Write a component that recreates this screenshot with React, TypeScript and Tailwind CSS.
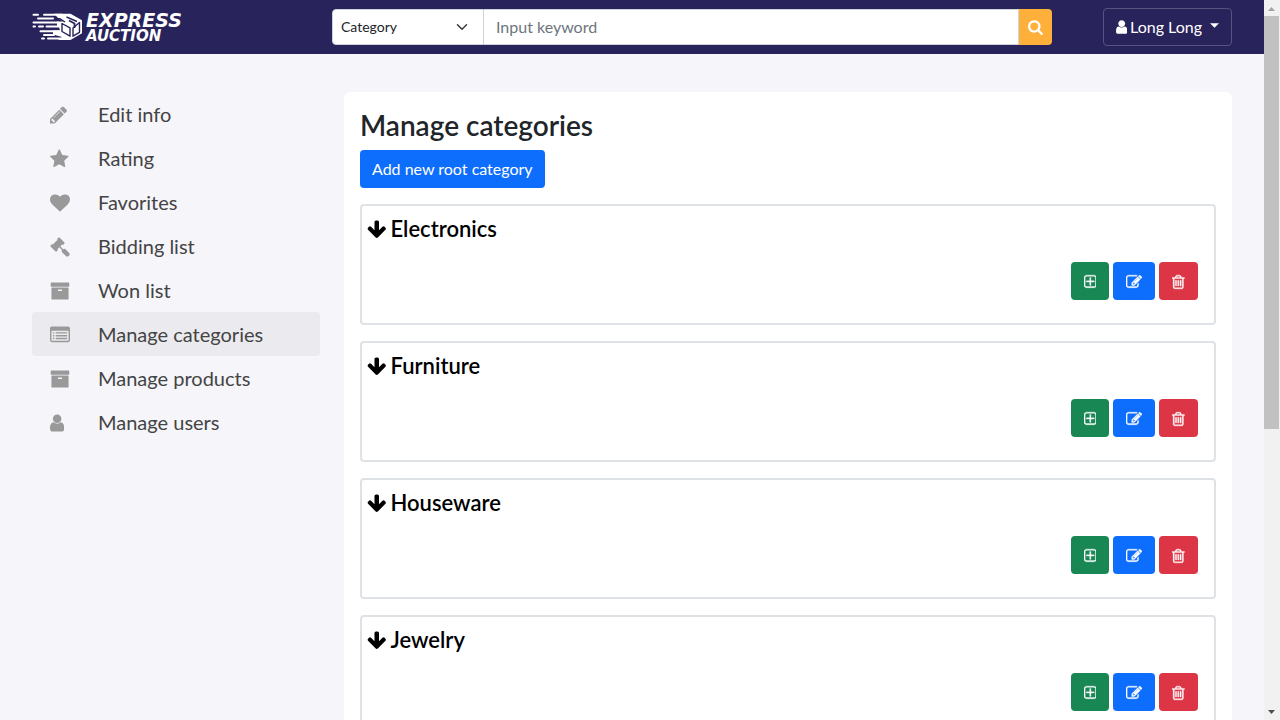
import React from "react";

type IconShape = { x: number; w: number; d: string };

const shapes = {
  pencil: {
    x: 128,
    w: 1536,
    d: "M491 1536l91-91-235-235-91 91v107h128v128h107zm523-928q0-22-22-22-10 0-17 7l-542 542q-7 7-7 17 0 22 22 22 10 0 17-7l542-542q7-7 7-17zm-54-192l416 416-832 832h-416v-416zm683 96q0 53-37 90l-166 166-416-416 166-165q36-38 90-38 53 0 91 38l235 234q37 39 37 91z",
  },
  star: {
    x: 64,
    w: 1664,
    d: "M1728 647q0 22-26 48l-363 354 86 500q1 7 1 20 0 21-10.5 35.5t-30.5 14.5q-19 0-40-12l-449-236-449 236q-22 12-40 12-21 0-31.5-14.5t-10.5-35.5q0-6 2-20l86-500-364-354q-25-27-25-48 0-37 56-46l502-73 225-455q19-41 49-41t49 41l225 455 502 73q56 9 56 46z",
  },
  heart: {
    x: 0,
    w: 1792,
    d: "M896 1664q-26 0-44-18l-624-602q-10-8-27.5-26t-55.5-65.5-68-97.5-53.5-121-23.5-138q0-220 127-344t351-124q62 0 126.5 21.5t120 58 95.5 68.5 76 68q36-36 76-68t95.5-68.5 120-58 126.5-21.5q224 0 351 124t127 344q0 221-229 450l-623 600q-18 18-44 18z",
  },
  gavel: {
    x: 0,
    w: 1792,
    d: "M1771 1536q0 53-37 90l-107 108q-39 37-91 37-53 0-90-37l-363-364q-38-36-38-90 0-53 43-96l-256-256-126 126q-14 14-34 14t-34-14q2 2 12.5 12t12.5 13 10 11.5 10 13.5 6 13.5 5.5 16.5 1.5 18q0 38-28 68-3 3-16.5 18t-19 20.5-18.5 16.5-22 15.5-22 9-26 4.5q-40 0-68-28l-408-408q-28-28-28-68 0-13 4.5-26t9-22 15.5-22 16.5-18.5 20.5-19 18-16.5q30-28 68-28 10 0 18 1.5t16.5 5.5 13.5 6 13.5 10 11.5 10 13 12.5 12 12.5q-14-14-14-34t14-34l348-348q14-14 34-14t34 14q-2-2-12.5-12t-12.5-13-10-11.5-10-13.5-6-13.5-5.5-16.5-1.5-18q0-38 28-68 3-3 16.5-18t19-20.5 18.5-16.5 22-15.5 22-9 26-4.5q40 0 68 28l408 408q28 28 28 68 0 13-4.5 26t-9 22-15.5 22-16.5 18.5-20.5 19-18 16.5q-30 28-68 28-10 0-18-1.5t-16.5-5.5-13.5-6-13.5-10-11.5-10-13-12.5-12-12.5q14 14 14 34t-14 34l-126 126 256 256q43-43 96-43 52 0 91 37l363 363q37 39 37 91z",
  },
  archive: {
    x: 0,
    w: 1792,
    d: "M1088 832q0-26-19-45t-45-19h-256q-26 0-45 19t-19 45 19 45 45 19h256q26 0 45-19t19-45zm576-192v960q0 26-19 45t-45 19h-1408q-26 0-45-19t-19-45v-960q0-26 19-45t45-19h1408q26 0 45 19t19 45zm64-448v256q0 26-19 45t-45 19h-1536q-26 0-45-19t-19-45v-256q0-26 19-45t45-19h1536q26 0 45 19t19 45z",
  },
  list: {
    x: 0,
    w: 1792,
    d: "M160 128h1472a160 160 0 0 1 160 160v1088a160 160 0 0 1-160 160h-1472a160 160 0 0 1-160-160v-1088a160 160 0 0 1 160-160zM160 512a32 32 0 0 0-32 32v832a32 32 0 0 0 32 32h1472a32 32 0 0 0 32-32v-832a32 32 0 0 0-32-32zM256 640h128v128h-128zM256 896h128v128h-128zM256 1152h128v128h-128zM512 640h1024v128h-1024zM512 896h1024v128h-1024zM512 1152h1024v128h-1024z",
  },
  user: {
    x: 256,
    w: 1280,
    d: "M1536 1399q0 109-62.5 187t-150.5 78h-854q-88 0-150.5-78t-62.5-187q0-85 8.5-160.5t31.5-152 58.5-131 94-89 134.5-34.5q131 128 313 128t313-128q76 0 134.5 34.5t94 89 58.5 131 31.5 152 8.5 160.5zm-256-887q0 159-112.5 271.5t-271.5 112.5-271.5-112.5-112.5-271.5 112.5-271.5 271.5-112.5 271.5 112.5 112.5 271.5z",
  },
  search: {
    x: 64,
    w: 1664,
    d: "M1216 832q0-185-131.5-316.5t-316.5-131.5-316.5 131.5-131.5 316.5 131.5 316.5 316.5 131.5 316.5-131.5 131.5-316.5zm512 832q0 52-38 90t-90 38q-54 0-90-38l-343-342q-179 124-399 124-143 0-273.5-55.5t-225-150-150-225-55.5-273.5 55.5-273.5 150-225 225-150 273.5-55.5 273.5 55.5 225 150 150 225 55.5 273.5q0 220-124 399l343 343q37 37 37 90z",
  },
  arrowDown: {
    x: 64,
    w: 1664,
    d: "M1675 832q0 53-37 90l-651 652q-39 37-91 37-53 0-90-37l-651-652q-38-36-38-90 0-53 38-91l74-75q39-37 91-37 53 0 90 37l294 294v-704q0-52 38-90t90-38h128q52 0 90 38t38 90v704l294-294q37-37 90-37 52 0 91 37l75 75q37 39 37 91z",
  },
  plus: {
    x: 192,
    w: 1408,
    d: "M1344 800v64q0 14-9 23t-23 9h-352v352q0 14-9 23t-23 9h-64q-14 0-23-9t-9-23v-352h-352q-14 0-23-9t-9-23v-64q0-14 9-23t23-9h352v-352q0-14 9-23t23-9h64q14 0 23 9t9 23v352h352q14 0 23 9t9 23zm128 448v-832q0-66-47-113t-113-47h-832q-66 0-113 47t-47 113v832q0 66 47 113t113 47h832q66 0 113-47t47-113zm128-832v832q0 119-84.5 203.5t-203.5 84.5h-832q-119 0-203.5-84.5t-84.5-203.5v-832q0-119 84.5-203.5t203.5-84.5h832q119 0 203.5 84.5t84.5 203.5z",
  },
  edit: {
    x: 0,
    w: 1792,
    d: "M888 1184l116-116-152-152-116 116v56h96v96h56zm440-720q-16-16-33 1l-350 350q-17 17-1 33t33-1l350-350q17-17 1-33zm80 594v190q0 119-84.5 203.5t-203.5 84.5h-832q-119 0-203.5-84.5t-84.5-203.5v-832q0-119 84.5-203.5t203.5-84.5h832q63 0 117 25 15 7 18 23 3 17-9 29l-49 49q-14 14-32 8-23-6-45-6h-832q-66 0-113 47t-47 113v832q0 66 47 113t113 47h832q66 0 113-47t47-113v-126q0-13 9-22l64-64q15-15 35-7t20 29zm-96-738l288 288-672 672h-288v-288zm444 132l-92 92-288-288 92-92q28-28 68-28t68 28l152 152q28 28 28 68t-28 68z",
  },
  trash: {
    x: 192,
    w: 1408,
    d: "M704 736v576q0 14-9 23t-23 9h-64q-14 0-23-9t-9-23v-576q0-14 9-23t23-9h64q14 0 23 9t9 23zm256 0v576q0 14-9 23t-23 9h-64q-14 0-23-9t-9-23v-576q0-14 9-23t23-9h64q14 0 23 9t9 23zm256 0v576q0 14-9 23t-23 9h-64q-14 0-23-9t-9-23v-576q0-14 9-23t23-9h64q14 0 23 9t9 23zm128 724v-948h-896v948q0 22 7 40.5t14.5 27 10.5 8.5h832q3 0 10.5-8.5t14.5-27 7-40.5zm-672-1076h448l-48-117q-7-9-17-11h-317q-10 2-17 11zm928 32v64q0 14-9 23t-23 9h-96v948q0 83-47 143.5t-113 60.5h-832q-66 0-113-58.5t-47-141.5v-952h-96q-14 0-23-9t-9-23v-64q0-14 9-23t23-9h309l70-167q15-37 54-63t79-26h320q40 0 79 26t54 63l70 167h309q14 0 23 9t9 23z",
  },
} satisfies Record<string, IconShape>;

type IconName = keyof typeof shapes;

function Icon({ name, className }: { name: IconName; className: string }) {
  const s = shapes[name];
  return (
    <svg
      viewBox={`${s.x} 0 ${s.w} 1792`}
      className={`w-auto shrink-0 fill-current ${className}`}
      fillRule="evenodd"
      aria-hidden="true"
    >
      <path d={s.d} />
    </svg>
  );
}

function Logo() {
  return (
    <span className="flex items-center gap-[3px]">
      <svg viewBox="0 0 51 32" className="h-8 w-[51px] shrink-0" aria-hidden="true">
        <g stroke="#fff" strokeWidth="2" strokeLinecap="round" fill="none">
          <path d="M1.500 3.800H6M12 3.800H30M6 7.600H21M1.500 11.500H26M1.500 15.500H3M7 15.500H11M14.500 15.500H28M8.500 20.300H30M12 24H22M10 27.600H12M16 27.600H32" />
        </g>
        <path
          d="M22 2.800H38.500L50 9.300V22.300L38.500 29H26L30 26L21 23.500V19.500H28L27 16H25V10.500H31L27 8Z"
          fill="#fff"
        />
        <path
          d="M22.500 7.800L28 7.800L33 11M30 12.500V20.500L38 25.200V16.800ZM41 17V25.200L47.500 21.300V11.500ZM34.500 6L45 10.500"
          fill="none"
          stroke="#29235c"
          strokeWidth="1.400"
          strokeLinejoin="round"
        />
        <path d="M37 9.500L42.500 12.500V17" fill="none" stroke="#29235c" strokeWidth="1.800" />
      </svg>
      <span className="flex flex-col pt-0.5 font-['DejaVu_Sans',sans-serif] font-bold text-white italic">
        <span className="text-[19px] leading-4">EXPRESS</span>
        <span className="text-[15px] leading-4">AUCTION</span>
      </span>
    </span>
  );
}

const menu: { icon: IconName; label: string; active?: boolean }[] = [
  { icon: "pencil", label: "Edit info" },
  { icon: "star", label: "Rating" },
  { icon: "heart", label: "Favorites" },
  { icon: "gavel", label: "Bidding list" },
  { icon: "archive", label: "Won list" },
  { icon: "list", label: "Manage categories", active: true },
  { icon: "archive", label: "Manage products" },
  { icon: "user", label: "Manage users" },
];

const categories = ["Electronics", "Furniture", "Houseware", "Jewelry"];

function Header() {
  return (
    <header className="flex h-[54px] shrink-0 items-center bg-[#29235c] px-8">
      <a href="#" aria-label="Express Auction" className="w-[300px] shrink-0">
        <Logo />
      </a>
      <form className="flex h-9 min-w-0 flex-1" onSubmit={(e) => e.preventDefault()}>
        <div className="relative w-[152px] shrink-0">
          <select
            aria-label="Category"
            className="h-full w-full appearance-none rounded-l border border-[#ced4da] bg-white pl-2 text-sm text-[#212529]"
          >
            <option>Category</option>
          </select>
          <svg
            viewBox="0 0 16 16"
            className="pointer-events-none absolute top-3 right-4 size-3 fill-none stroke-[#343a40] stroke-2"
            aria-hidden="true"
          >
            <path d="M2 5l6 6 6-6" strokeLinecap="round" strokeLinejoin="round" />
          </svg>
        </div>
        <input
          type="text"
          aria-label="Keyword"
          placeholder="Input keyword"
          className="min-w-0 flex-1 border-y border-r border-[#ced4da] bg-white px-3 text-base text-[#212529] placeholder:text-[#6c757d]"
        />
        <button
          type="submit"
          aria-label="Search"
          className="flex w-[33px] items-center justify-center rounded-r bg-[#ffb03b] text-white"
        >
          <Icon name="search" className="h-4" />
        </button>
      </form>
      <button
        type="button"
        className="ml-[51px] flex h-[38px] items-center rounded border border-[#57527f] px-3 text-base text-white"
      >
        <Icon name="user" className="mr-[3px] h-4" />
        Long Long
        <svg viewBox="0 0 10 5" className="mb-1 ml-2 h-[5px] w-[9px] fill-current" aria-hidden="true">
          <path d="M0 0H10L5 5Z" />
        </svg>
      </button>
    </header>
  );
}

function Sidebar() {
  return (
    <nav className="w-72 shrink-0 pt-[38px]">
      {menu.map((m) => (
        <a
          key={m.label}
          href="#"
          className={`flex h-11 items-center rounded pl-[18px] text-xl text-[#444] ${m.active ? "bg-[#ebebef]" : ""}`}
        >
          <span className="w-12 shrink-0 pt-px text-[#999]">
            <Icon name={m.icon} className="h-5" />
          </span>
          {m.label}
        </a>
      ))}
    </nav>
  );
}

function CategoryCard({ name }: { name: string }) {
  return (
    <section className="mt-4 rounded border-2 border-[#dee2e6] pt-[10px] pr-4 pb-[23px] pl-[5px]">
      <h3 className="flex h-[26px] items-center gap-1 text-[22px] leading-[26px] font-semibold text-black">
        <Icon name="arrowDown" className="mt-px h-[21px]" />
        {name}
      </h3>
      <div className="mt-5 flex justify-end gap-1">
        <button
          type="button"
          aria-label={`Add to ${name}`}
          className="flex h-[38px] items-center rounded bg-[#198754] px-[13px] pt-px text-white"
        >
          <Icon name="plus" className="h-4 stroke-current stroke-[40]" />
        </button>
        <button
          type="button"
          aria-label={`Edit ${name}`}
          className="flex h-[38px] items-center rounded bg-[#0d6efd] px-[13px] pt-px text-white"
        >
          <Icon name="edit" className="h-4 stroke-current stroke-[40]" />
        </button>
        <button
          type="button"
          aria-label={`Delete ${name}`}
          className="flex h-[38px] items-center rounded bg-[#dc3545] px-[13px] pt-px text-white"
        >
          <Icon name="trash" className="h-4 stroke-current stroke-[40]" />
        </button>
      </div>
    </section>
  );
}

function Scrollbar() {
  return (
    <div className="flex w-4 shrink-0 flex-col items-center bg-[#f1f1f1]" aria-hidden="true">
      <svg viewBox="0 0 16 16" className="size-4 shrink-0 fill-[#a3a3a3]">
        <path d="M4 11L7.500 7L11 11Z" />
      </svg>
      <div className="flex min-h-0 w-full flex-1 flex-col pr-px">
        <div className="h-3/5 bg-[#c1c1c1]" />
      </div>
      <svg viewBox="0 0 16 16" className="size-4 shrink-0 fill-[#505050]">
        <path d="M4 6L7.500 10L11 6Z" />
      </svg>
    </div>
  );
}

export default function App() {
  return (
    <div className="flex h-screen overflow-hidden bg-[#f5f5fa] font-['Lato',sans-serif]">
      <div className="flex min-w-0 flex-1 flex-col overflow-hidden">
        <Header />
        <div className="flex gap-6 px-8">
          <Sidebar />
          <main className="mt-[38px] min-w-0 flex-1 rounded-t-md bg-white p-4">
            <h2 className="mb-2 text-[28px] leading-[34px] font-semibold text-[#212529]">
              Manage categories
            </h2>
            <button
              type="button"
              className="flex h-[38px] items-center rounded bg-[#0d6efd] px-3 text-base text-white"
            >
              Add new root category
            </button>
            {categories.map((c) => (
              <CategoryCard key={c} name={c} />
            ))}
          </main>
        </div>
      </div>
      <Scrollbar />
    </div>
  );
}
